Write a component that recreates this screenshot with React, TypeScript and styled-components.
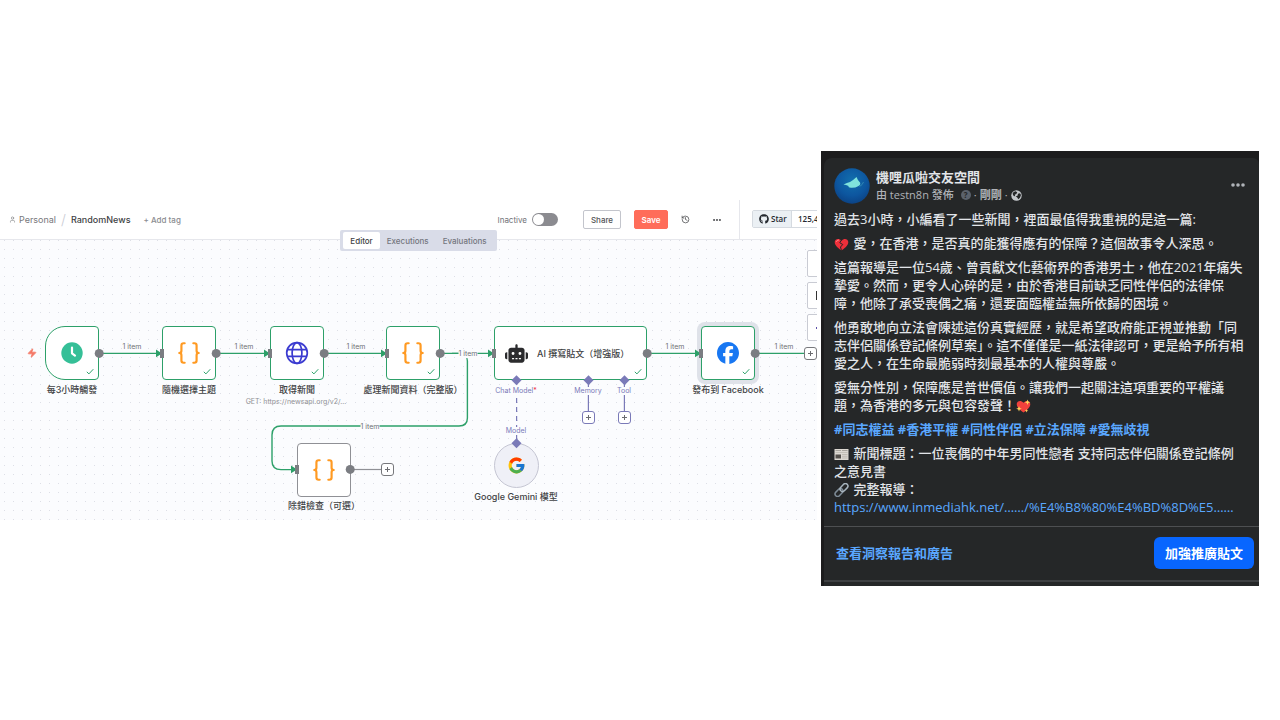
import React from "react";
import styled, { createGlobalStyle, css } from "styled-components";
import { Braces, History, User, Zap, Ellipsis } from "lucide-react";
import { FaFacebook, FaGithub, FaRobot } from "react-icons/fa6";
import { FcGoogle } from "react-icons/fc";

const GREEN = "#2da069";
const GREY = "#7b7d82";
const PURPLE = "#7a7ab8";
const CANVAS = "#fbfcfe";

const Global = createGlobalStyle`
  *, *::before, *::after { box-sizing: border-box; }
  body { margin: 0; background: #fff; }
  button { font: inherit; margin: 0; padding: 0; cursor: pointer; }
  p, h1, h2 { margin: 0; font: inherit; }
  svg { display: block; flex: none; }
`;

const Page = styled.main`
  display: flex;
  align-items: flex-start;
  gap: 4px;
  padding: 151px 21px 0 0;
  min-height: 100vh;
`;

/* ---------- workflow editor ---------- */

const Editor = styled.section`
  position: relative;
  flex: 1;
  min-width: 0;
  margin-top: 49px;
  overflow: hidden;
  font-family: Inter, "Noto Sans CJK TC", sans-serif;
  color: #414244;
`;

const TopBar = styled.header`
  display: flex;
  align-items: center;
  justify-content: space-between;
  height: 40px;
  padding-left: 9px;
  border-bottom: 1px solid #e6e7ec;
  white-space: nowrap;
`;

const Crumbs = styled.nav`
  display: flex;
  align-items: center;
  font-size: 9px;
  color: #77787c;
`;

const CrumbLink = styled.a`
  display: flex;
  align-items: center;
  gap: 3px;
  color: inherit;
  text-decoration: none;
`;

const Slash = styled.span`
  margin: 0 5px;
  font-size: 14px;
  font-weight: 300;
  color: #c9cbd3;
`;

const WorkflowName = styled.h1`
  color: #414244;
  font-weight: 500;
`;

const AddTag = styled.button`
  margin-left: 13px;
  border: 0;
  background: none;
  font-size: 8px;
  font-weight: 500;
  color: #8a8b90;
`;

const Actions = styled.div`
  display: flex;
  align-items: center;
  align-self: stretch;
  font-size: 8px;
`;

const ActiveSwitch = styled.label`
  display: flex;
  align-items: center;
  gap: 5px;
  margin-right: 25px;
  color: #717277;
`;

const SwitchInput = styled.input`
  appearance: none;
  position: relative;
  width: 26px;
  height: 13px;
  margin: 0;
  border-radius: 7px;
  background: #8b8b90;
  &::after {
    content: "";
    position: absolute;
    top: 1px;
    left: 1px;
    width: 11px;
    height: 11px;
    border-radius: 50%;
    background: #fff;
  }
  &:checked::after { left: 14px; }
`;

const BarButton = styled.button<{ $primary?: boolean }>`
  width: ${(p) => (p.$primary ? 34 : 38)}px;
  height: 19px;
  margin-right: ${(p) => (p.$primary ? 12 : 13)}px;
  border: 1px solid ${(p) => (p.$primary ? "#ff6d5a" : "#c3c5cc")};
  border-radius: 2px;
  background: ${(p) => (p.$primary ? "#ff6d5a" : "#fff")};
  color: ${(p) => (p.$primary ? "#fff" : "#525356")};
  font-weight: ${(p) => (p.$primary ? 600 : 500)};
`;

const IconButton = styled.button`
  display: grid;
  place-items: center;
  width: 10px;
  height: 16px;
  margin-right: 22px;
  border: 0;
  background: none;
  color: #48494c;
`;

const StarArea = styled.div`
  display: flex;
  align-items: center;
  align-self: stretch;
  width: 78px;
  margin-left: -5px;
  padding: 0 0 2px 12px;
  border-left: 1px solid #e6e7ec;
  overflow: hidden;
`;

const StarLink = styled.a`
  display: flex;
  flex: none;
  height: 18px;
  border: 1px solid #d5dae0;
  border-radius: 2px;
  color: #24292f;
  font-family: "Open Sans", sans-serif;
  font-size: 8px;
  font-weight: 600;
  line-height: 16px;
  text-decoration: none;
`;

const StarLabel = styled.span`
  display: flex;
  align-items: center;
  gap: 2px;
  width: 39px;
  padding-left: 6px;
  background: #ebf0f4;
  border-right: 1px solid #d5dae0;
`;

const StarCount = styled.span`
  padding: 0 6px;
`;

const TabLayer = styled.div`
  position: absolute;
  z-index: 2;
  top: 30px;
  left: 20px;
  right: 0;
  display: flex;
  justify-content: center;
  pointer-events: none;
`;

const Tabs = styled.div`
  display: flex;
  align-items: center;
  height: 21px;
  padding: 0 3px;
  border-radius: 2px;
  background: #d9dce8;
  pointer-events: auto;
`;

const Tab = styled.button<{ $on?: boolean }>`
  height: 17px;
  padding: 0 7px;
  border: 0;
  border-radius: 2px;
  background: ${(p) => (p.$on ? "#fff" : "none")};
  color: ${(p) => (p.$on ? "#414244" : "#74767e")};
  font-size: 8px;
  font-weight: 500;
`;

const Canvas = styled.div`
  position: relative;
  height: 280px;
  overflow: hidden;
  background-color: ${CANVAS};
  background-image: radial-gradient(circle, #dddfe6 0.6px, transparent 1px);
  background-size: 9px 9px;
  background-position: 0 -4px;
`;

const Wires = styled.svg`
  position: absolute;
  inset: 0;
  width: 100%;
  height: 100%;
`;

const NodeBox = styled.div<{
  $x: number; $y: number;
  $kind?: "trigger" | "idle" | "selected" | "model" | "wide";
}>`
  position: absolute;
  left: ${(p) => p.$x}px;
  top: ${(p) => p.$y}px;
  width: 54px;
  height: 54px;
  display: flex;
  align-items: center;
  justify-content: center;
  border: 1px solid ${GREEN};
  border-radius: 4px;
  background: #fff;
  font-size: 9px;
  font-weight: 500;
  white-space: nowrap;
  ${(p) => p.$kind === "trigger" && css`border-radius: 20px 4px 4px 20px;`}
  ${(p) => p.$kind === "idle" && css`border-color: #8f9095;`}
  ${(p) => p.$kind === "selected" && css`box-shadow: 0 0 0 4px #dfe2e9;`}
  ${(p) => p.$kind === "wide" && css`
    width: 153px;
    justify-content: flex-start;
    gap: 9px;
    padding-left: 10px;
  `}
  ${(p) => p.$kind === "model" && css`
    width: 45px;
    height: 45px;
    border-color: #c5c6d3;
    border-radius: 50%;
    background: #eff0f7;
  `}
`;

const Tick = styled.svg`
  position: absolute;
  right: 4px;
  bottom: 4px;
`;

const Caption = styled.div<{ $x: number; $y: number; $tone?: "sub" | "wire" | "port" }>`
  position: absolute;
  left: ${(p) => p.$x}px;
  top: ${(p) => p.$y}px;
  transform: translate(-50%, -50%);
  font-size: 9px;
  line-height: 12px;
  font-weight: 500;
  white-space: nowrap;
  ${(p) => p.$tone === "sub" && css`font-size: 7px; font-weight: 400; color: #8f9095;`}
  ${(p) => p.$tone === "wire" && css`
    font-size: 7px; line-height: 8px; font-weight: 400; color: #6f7074; background: ${CANVAS};
  `}
  ${(p) => p.$tone === "port" && css`
    font-size: 7px; line-height: 8px; font-weight: 400; color: ${PURPLE}; background: ${CANVAS};
  `}
`;

const Required = styled.span`
  color: #f0304a;
`;

const PlusButton = styled.button<{ $x: number; $y: number; $color: string }>`
  position: absolute;
  left: ${(p) => p.$x}px;
  top: ${(p) => p.$y}px;
  display: grid;
  place-items: center;
  width: 13px;
  height: 13px;
  border: 1px solid ${(p) => p.$color};
  border-radius: 3px;
  background: #fff;
  color: #6b6c70;
`;

const SideTools = styled.div`
  position: absolute;
  top: 10px;
  right: -17px;
  display: grid;
  gap: 5px;
`;

const SideTool = styled.button<{ $mark?: string }>`
  width: 27px;
  height: 27px;
  padding-left: 8px;
  border: 1px solid #c9cbd3;
  border-radius: 2px;
  background: #fff;
  color: ${(p) => p.$mark};
`;

const Bolt = styled.span`
  position: absolute;
  left: 27px;
  top: 108px;
`;

function Check() {
  return (
    <Tick width="8" height="7" viewBox="0 0 8 7" fill="none" stroke={GREEN} strokeWidth="1">
      <path d="M0.8 3.8 L2.9 5.9 L7.3 1.2" />
    </Tick>
  );
}

function Plus({ x, y, color, label }: { x: number; y: number; color: string; label: string }) {
  return (
    <PlusButton $x={x} $y={y} $color={color} aria-label={label}>
      <svg width="7" height="7" viewBox="0 0 7 7" stroke="currentColor"><path d="M3.5 1v5M1 3.5h5" /></svg>
    </PlusButton>
  );
}

const Code = () => <Braces size={26} color="#ff9a22" strokeWidth={2} />;

const ClockIcon = () => (
  <svg width="22" height="22" viewBox="0 0 22 22">
    <circle cx="11" cy="11" r="10.7" fill="#35bf97" />
    <path d="M11 5.5V11.3L14 13.6" fill="none" stroke="#fff" strokeWidth="2.2" strokeLinecap="round" strokeLinejoin="round" />
  </svg>
);

const GlobeIcon = () => (
  <svg width="24" height="24" viewBox="0 0 24 24" fill="none" stroke="#3b3bd0" strokeWidth="1.7">
    <circle cx="12" cy="12" r="10.3" />
    <ellipse cx="12" cy="12" rx="4.9" ry="10.3" />
    <path d="M2.3 8.6h19.4M2.3 15.4h19.4" />
  </svg>
);

const arrows: [number, number][] = [[162, 113], [270, 113], [387, 113], [494, 113], [701, 113], [297, 229]];
const outputs: [number, number][] = [[99, 113], [216, 113], [324, 113], [440, 113], [647, 113], [755, 113], [350, 229]];
const diamonds: [number, number][] = [[516, 140], [588, 140], [624, 140], [516, 203]];

function WireLines() {
  return (
    <Wires aria-hidden="true">
      <g fill="none" stroke={GREEN} strokeWidth="1.4">
        <path d="M99 113.4H158M216 113.4H266M324 113.4H383M440 113.4H490M647 113.4H697M755 113.4H806" />
        <path d="M452 113.4H459Q467.4 113.4 467.4 121V178Q467.4 186 459 186H281Q272 186 272 195V221Q272 229.6 281 229.6H293" />
      </g>
      <path d="M350 229.5H381" stroke="#8f9095" strokeWidth="1.2" />
      <g stroke={PURPLE} strokeWidth="1.2">
        <path d="M588.4 140V171M624.4 140V171M516.6 192V203" />
        <path d="M516.6 150V188" strokeDasharray="5 4" strokeDashoffset="1" />
      </g>
    </Wires>
  );
}

function Ports() {
  return (
    <Wires aria-hidden="true" pointerEvents="none">
      {arrows.map(([x, y]) => (
        <g key={`${x}-${y}`}>
          <path d={`M${x - 6} ${y - 3.4}L${x} ${y + 0.4}L${x - 6} ${y + 4.2}Z`} fill={GREEN} />
          <rect x={x - 2} y={y - 4} width="4" height="9" fill={GREY} />
        </g>
      ))}
      {outputs.map(([x, y]) => <circle key={`${x}-${y}`} cx={x + 0.2} cy={y + 0.4} r="4.5" fill={GREY} />)}
      {diamonds.map(([x, y]) => (
        <path key={`${x}-${y}`} d={`M${x + 0.5} ${y - 4.7}l5 5l-5 5l-5 -5z`} fill={PURPLE} />
      ))}
    </Wires>
  );
}

function Workflow() {
  return (
    <Canvas>
      <WireLines />
      <Bolt><Zap size={10} color="#f47866" fill="#f47866" /></Bolt>

      <NodeBox $x={45} $y={86} $kind="trigger"><ClockIcon /><Check /></NodeBox>
      <NodeBox $x={162} $y={86}><Code /><Check /></NodeBox>
      <NodeBox $x={270} $y={86}><GlobeIcon /><Check /></NodeBox>
      <NodeBox $x={386} $y={86}><Code /><Check /></NodeBox>
      <NodeBox $x={494} $y={86} $kind="wide">
        <FaRobot size={23} color="#2b2b2d" />
        AI 撰寫貼文（增強版）
        <Check />
      </NodeBox>
      <NodeBox $x={701} $y={86} $kind="selected"><FaFacebook size={22} color="#1877f2" /><Check /></NodeBox>
      <NodeBox $x={297} $y={203} $kind="idle"><Code /></NodeBox>
      <NodeBox $x={494} $y={203} $kind="model"><FcGoogle size={19} /></NodeBox>

      <Caption $x={72} $y={150}>每3小時觸發</Caption>
      <Caption $x={189} $y={150}>隨機選擇主題</Caption>
      <Caption $x={297} $y={150}>取得新聞</Caption>
      <Caption $x={296} $y={162} $tone="sub">GET: https://newsapi.org/v2/...</Caption>
      <Caption $x={413} $y={150}>處理新聞資料（完整版）</Caption>
      <Caption $x={728} $y={150}>發布到 Facebook</Caption>
      <Caption $x={324} $y={266}>除錯檢查（可選）</Caption>
      <Caption $x={516} $y={257}>Google Gemini 模型</Caption>

      <Caption $x={132} $y={107} $tone="wire">1 item</Caption>
      <Caption $x={244} $y={107} $tone="wire">1 item</Caption>
      <Caption $x={356} $y={107} $tone="wire">1 item</Caption>
      <Caption $x={468} $y={114} $tone="wire">1 item</Caption>
      <Caption $x={675} $y={107} $tone="wire">1 item</Caption>
      <Caption $x={784} $y={107} $tone="wire">1 item</Caption>
      <Caption $x={370} $y={187} $tone="wire">1 item</Caption>

      <Caption $x={516} $y={151} $tone="port">Chat Model<Required>*</Required></Caption>
      <Caption $x={588} $y={151} $tone="port">Memory</Caption>
      <Caption $x={624} $y={151} $tone="port">Tool</Caption>
      <Caption $x={516} $y={191} $tone="port">Model</Caption>

      <Ports />
      <SideTools>
        <SideTool aria-label="Add node" />
        <SideTool aria-label="Add note" $mark="#333">
          <svg width="3" height="9"><rect width="1" height="9" fill="currentColor" /></svg>
        </SideTool>
        <SideTool aria-label="Assistant" $mark="#5c4fa8">
          <svg width="3" height="4"><rect y="1" width="2" height="2" fill="currentColor" /></svg>
        </SideTool>
      </SideTools>
      <Plus x={381} y={223} color="#77787c" label="Add after 除錯檢查" />
      <Plus x={804} y={107} color="#77787c" label="Add after Facebook" />
      <Plus x={582} y={171} color={PURPLE} label="Add memory" />
      <Plus x={618} y={171} color={PURPLE} label="Add tool" />
    </Canvas>
  );
}

/* ---------- social post ---------- */

const Post = styled.article`
  flex: none;
  width: 438px;
  padding: 7px 0 0 3px;
  background: #1c1c1d;
  font-family: "Open Sans", "Noto Sans CJK TC", sans-serif;
  font-size: 13px;
  font-weight: 500;
  color: #e2e5e9;
`;

const Card = styled.div`
  padding-bottom: 4px;
  border-radius: 8px 6px 0 0;
  background: #252728;
`;

const PostHead = styled.header`
  display: flex;
  align-items: center;
  gap: 6px;
  padding: 10px 13px 6px 10px;
`;

const Byline = styled.div`
  flex: 1;
`;

const PageName = styled.h2`
  font-weight: 700;
  line-height: 18px;
`;

const Meta = styled.p`
  display: flex;
  align-items: center;
  gap: 3px;
  font-size: 11px;
  line-height: 18px;
  color: #b0b3b8;
`;

const Help = styled.span`
  display: grid;
  place-items: center;
  width: 10px;
  height: 10px;
  margin-left: 4px;
  border-radius: 50%;
  background: #5b626c;
  color: #252728;
  font-size: 8px;
  font-weight: 700;
  line-height: 10px;
`;

const MoreButton = styled.button`
  margin-bottom: 3px;
  border: 0;
  background: none;
  color: #b0b3b8;
`;

const Body = styled.div`
  display: grid;
  gap: 6px;
  padding: 0 0 10px 10px;
  line-height: 18px;
  white-space: nowrap;
`;

const Link = styled.a<{ $bold?: boolean }>`
  color: #5aa7ff;
  font-weight: ${(p) => (p.$bold ? 700 : "inherit")};
  text-decoration: none;
`;

const Emoji = styled.svg`
  display: inline-block;
  width: 15px;
  height: 14px;
  margin-right: 1px;
  vertical-align: -3px;
`;

const PostFoot = styled.footer`
  display: flex;
  align-items: center;
  justify-content: space-between;
  height: 56px;
  padding: 0 5px 2px 12px;
  border-top: 1px solid #4d4f51;
  border-bottom: 2px solid #3e4042;
  font-weight: 700;
`;

const BoostButton = styled.button`
  width: 100px;
  height: 32px;
  border: 0;
  border-radius: 6px;
  background: #0866ff;
  color: #fff;
`;

const Avatar = () => (
  <svg width="36" height="36" viewBox="0 0 36 36" role="img" aria-label="Page avatar">
    <defs>
      <radialGradient id="sea" cx="0.5" cy="0.35" r="0.7">
        <stop offset="0" stopColor="#126fae" />
        <stop offset="0.6" stopColor="#0d569f" />
        <stop offset="1" stopColor="#0b3f80" />
      </radialGradient>
    </defs>
    <circle cx="18" cy="18" r="17.7" fill="url(#sea)" />
    <path d="M9.5 16.5Q13 14.5 16 14Q20 11.500 22.500 9Q23.5 12 26 14.5Q27 17 24 18.2Q21.5 20 17 19.8Q14 19.5 14.5 18Q12 16.500 9.5 16.500Z" fill="#7fe3dc" />
    <path d="M25.500 18.5Q28.500 17 29.5 14" fill="none" stroke="#2f86b4" strokeWidth="1" />
  </svg>
);

const World = () => (
  <svg width="11" height="11" viewBox="0 0 22 22">
    <circle cx="11" cy="11" r="10.5" fill="#c4c7cb" />
    <path d="M3.5 6Q6 3 9.5 2.6L12.5 5L10.5 8L7.5 9.5L8.5 12.5L5.5 12Q3 9.5 3.5 6ZM14 7.5L18 6.5L20 10L18 15.5L14.5 18.5L12.5 15L9.5 12.5L13 11.5Z" fill="#252728" />
  </svg>
);

const HEART = "M15 27C5 20 1 15 1.500 9.500C2 4 9.500 1 15 7.500C20.500 1 28 4 28.500 9.500C29 15 25 20 15 27Z";

const BrokenHeart = () => (
  <Emoji viewBox="0 0 30 28" role="img" aria-label="broken heart">
    <path d={HEART} fill="#ee2f3a" />
    <path d="M15 6L11.5 11.5L17.5 15L13 20L15 27.5" fill="none" stroke="#252728" strokeWidth="2" />
    <path d="M5 9Q6 6 9 6" fill="none" stroke="#ff8f90" strokeWidth="1.8" strokeLinecap="round" />
  </Emoji>
);

const SparkHeart = () => (
  <Emoji viewBox="0 0 30 28" role="img" aria-label="sparkling heart">
    <path d={HEART} fill="#f2413c" />
    <path d="M23 1l1.500 4l4 1.500l-4 1.500l-1.500 4l-1.500-4l-4-1.500l4-1.500zM6 14l1.500 4l4 1.500l-4 1.500l-1.500 4l-1.500-4l-4-1.500l4-1.500zM21 20l1 2.500l2.500 1l-2.500 1l-1 2.500l-1-2.500l-2.500-1l2.500-1z" fill="#ffd45c" />
  </Emoji>
);

const Newspaper = () => (
  <Emoji viewBox="0 0 30 28" role="img" aria-label="newspaper">
    <path d="M1 4H29V26H1Z" fill="#ddd9d2" />
    <path d="M3 7H14M16 7H27" stroke="#9b978f" strokeWidth="1.6" />
    <path d="M3 11H27" stroke="#b9b5ae" strokeWidth="1.4" />
    <rect x="3" y="15" width="11" height="8" fill="#55514c" />
    <path d="M16 15H27M16 18.5H27M16 22H27" stroke="#b3afa8" strokeWidth="1.4" />
  </Emoji>
);

const Chain = () => (
  <Emoji viewBox="0 0 30 28" role="img" aria-label="link">
    <g fill="none" strokeWidth="3" transform="rotate(-45 15 14)">
      <rect x="-1" y="9" width="18" height="10" rx="5" stroke="#7d8b96" />
      <rect x="13" y="9" width="18" height="10" rx="5" stroke="#a7b4bd" />
    </g>
  </Emoji>
);

function SocialPost() {
  return (
    <Post>
      <Card>
        <PostHead>
          <Avatar />
          <Byline>
            <PageName>機哩瓜啦交友空間</PageName>
            <Meta>
              由 testn8n 發佈 <Help>?</Help> · <b>剛剛</b> · <World />
            </Meta>
          </Byline>
          <MoreButton aria-label="More">
            <svg width="16" height="16" viewBox="0 0 16 16" fill="currentColor">
              <circle cx="3" cy="8" r="1.8" /><circle cx="8" cy="8" r="1.8" /><circle cx="13" cy="8" r="1.8" />
            </svg>
          </MoreButton>
        </PostHead>
        <Body>
          <p>過去3小時，小編看了一些新聞，裡面最值得我重視的是這一篇:</p>
          <p><BrokenHeart /> 愛，在香港，是否真的能獲得應有的保障？這個故事令人深思。</p>
          <p>
            這篇報導是一位54歲、曾貢獻文化藝術界的香港男士，他在2021年痛失<br />
            摯愛。然而，更令人心碎的是，由於香港目前缺乏同性伴侶的法律保<br />
            障，他除了承受喪偶之痛，還要面臨權益無所依歸的困境。
          </p>
          <p>
            他勇敢地向立法會陳述這份真實經歷，就是希望政府能正視並推動「同<br />
            志伴侶關係登記條例草案」。這不僅僅是一紙法律認可，更是給予所有相<br />
            愛之人，在生命最脆弱時刻最基本的人權與尊嚴。
          </p>
          <p>
            愛無分性別，保障應是普世價值。讓我們一起關注這項重要的平權議<br />
            題，為香港的多元與包容發聲！<SparkHeart />
          </p>
          <p>
            <Link $bold href="#t1">#同志權益</Link> <Link $bold href="#t2">#香港平權</Link>{" "}
            <Link $bold href="#t3">#同性伴侶</Link> <Link $bold href="#t4">#立法保障</Link>{" "}
            <Link $bold href="#t5">#愛無歧視</Link>
          </p>
          <p>
            <Newspaper /> 新聞標題：一位喪偶的中年男同性戀者 支持同志伴侶關係登記條例<br />
            之意見書<br />
            <Chain /> 完整報導：<br />
            <Link href="#report">https://www.inmediahk.net/……/%E4%B8%80%E4%BD%8D%E5……</Link>
          </p>
        </Body>
        <PostFoot>
          <Link href="#insights">查看洞察報告和廣告</Link>
          <BoostButton>加強推廣貼文</BoostButton>
        </PostFoot>
      </Card>
    </Post>
  );
}

export default function App() {
  return (
    <Page lang="zh-Hant">
      <Global />
      <Editor>
        <TopBar>
          <Crumbs>
            <CrumbLink href="#personal"><User size={7} />Personal</CrumbLink>
            <Slash>/</Slash>
            <WorkflowName>RandomNews</WorkflowName>
            <AddTag>+ Add tag</AddTag>
          </Crumbs>
          <Actions>
            <ActiveSwitch>Inactive<SwitchInput type="checkbox" /></ActiveSwitch>
            <BarButton>Share</BarButton>
            <BarButton $primary>Save</BarButton>
            <IconButton aria-label="History"><History size={9} /></IconButton>
            <IconButton aria-label="More"><Ellipsis size={10} strokeWidth={3} /></IconButton>
            <StarArea>
              <StarLink href="#star">
                <StarLabel><FaGithub size={10} />Star</StarLabel>
                <StarCount>125,45</StarCount>
              </StarLink>
            </StarArea>
          </Actions>
        </TopBar>
        <TabLayer>
          <Tabs>
            <Tab $on>Editor</Tab>
            <Tab>Executions</Tab>
            <Tab>Evaluations</Tab>
          </Tabs>
        </TabLayer>
        <Workflow />
      </Editor>
      <SocialPost />
    </Page>
  );
}
